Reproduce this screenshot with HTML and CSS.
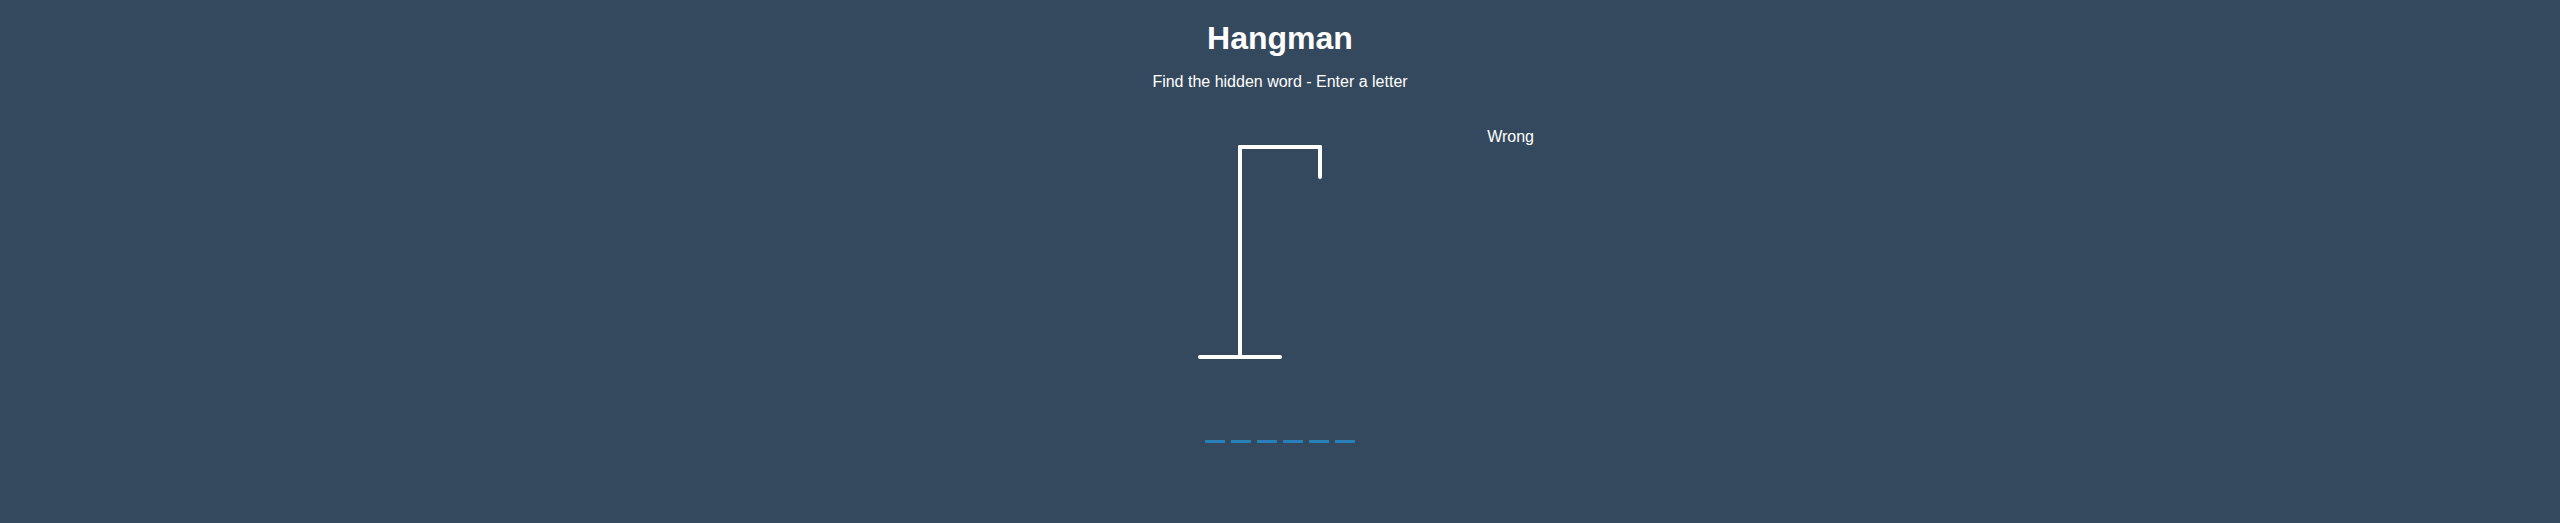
FILE: index.html
```html
<!DOCTYPE html>
<html lang="en">
<head>
<meta charset="UTF-8">
<title>Hangman</title>
<link rel="stylesheet" href="styles.css">
</head>
<body>
<h1 class="title">Hangman</h1>
<p class="subtitle">Find the hidden word - Enter a letter</p>
<div class="game-container">
  <svg height="250" width="200" class="figure-container">
    <line x1="60" y1="20" x2="140" y2="20" />
    <line x1="140" y1="20" x2="140" y2="50" />
    <line x1="60" y1="20" x2="60" y2="230" />
    <line x1="20" y1="230" x2="100" y2="230" />
  </svg>
  <div class="wrong-letters-container">
    <p class="wrong-label">Wrong</p>
  </div>
  <div class="word">
    <span class="letter"></span>
    <span class="letter"></span>
    <span class="letter"></span>
    <span class="letter"></span>
    <span class="letter"></span>
    <span class="letter"></span>
  </div>
</div>
</body>
</html>
```
FILE: styles.css
```css
* {
  box-sizing: border-box;
}

html {
  background-color: #34495e;
}

body {
  background-color: #34495e;
  color: #fff;
  font-family: "Liberation Sans", Arial, Helvetica, sans-serif;
  display: flex;
  flex-direction: column;
  align-items: center;
  margin: 0;
}

.title {
  font-size: 32px;
  margin: 20px 0 0;
}

.subtitle {
  font-size: 16px;
  margin: 16px 0;
}

.game-container {
  padding: 20px 30px;
  position: relative;
  margin: 0 auto;
  height: 350px;
  width: 546px;
  flex-shrink: 0;
  display: flex;
  justify-content: center;
  align-items: flex-start;
}

.figure-container {
  fill: transparent;
  stroke: #fff;
  stroke-width: 4px;
  stroke-linecap: round;
}

.wrong-letters-container {
  position: absolute;
  top: 21px;
  right: 19px;
  display: flex;
  flex-direction: column;
  text-align: right;
}

.wrong-label {
  margin: 0 0 5px;
}

.word {
  display: flex;
  position: absolute;
  bottom: 14px;
  left: 50%;
  transform: translateX(-50%);
}

.letter {
  border-bottom: 3px solid #2980b9;
  display: inline-flex;
  font-size: 30px;
  align-items: center;
  justify-content: center;
  margin: 0 3px;
  height: 50px;
  width: 20px;
}
```
